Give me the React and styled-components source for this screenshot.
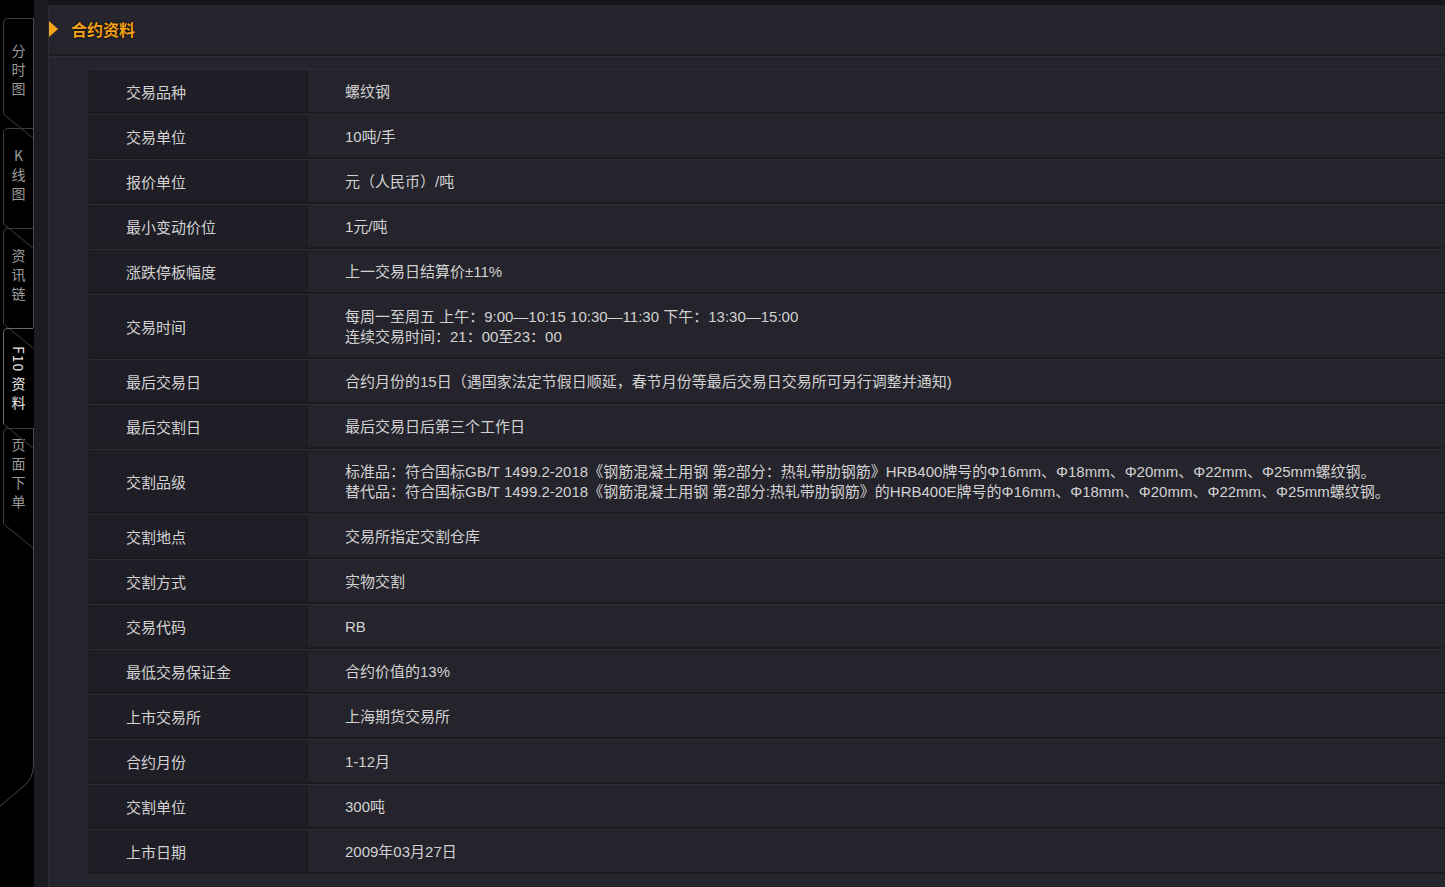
import React from "react";
import styled, { createGlobalStyle } from "styled-components";

const GlobalStyle = createGlobalStyle`
  html, body { margin: 0; padding: 0; background: #17161c; overflow: hidden; }
  body { font-family: "Liberation Sans", "Noto Sans CJK SC", "Microsoft YaHei", sans-serif; }
`;

const Page = styled.div`
  display: flex;
  width: 1445px;
  height: 887px;
  overflow: hidden;
`;

const Sidebar = styled.nav`
  position: relative;
  flex: 0 0 34px;
  background: #000;
  padding-top: 18px;
  display: flex;
  flex-direction: column;
  box-sizing: border-box;
`;

const SideFrame = styled.svg`
  position: absolute;
  left: 0;
  top: 0;
  pointer-events: none;
`;

const Tab = styled.div`
  height: ${(p) => p.$h}px;
  box-sizing: border-box;
  padding-top: ${(p) => p.$pt}px;
  display: flex;
  justify-content: center;
  padding-left: 3px;
`;

const TabText = styled.span`
  writing-mode: vertical-rl;
  text-orientation: ${(p) => (p.$upright ? "upright" : "mixed")};
  font-family: "Noto Sans CJK SC", sans-serif;
  font-size: 14px;
  line-height: 16px;
  letter-spacing: 5px;
  color: ${(p) => (p.$active ? "#e8e8e8" : "#9a9a9a")};
`;

const Latin = styled.span`
  letter-spacing: 1px;
  margin-bottom: 4px;
`;

const Gutter = styled.div`
  flex: 0 0 14px;
  background: #1c1b21;
`;

const Main = styled.main`
  flex: 1;
  padding-top: 5px;
  background: #16151b;
  min-width: 0;
`;

const Panel = styled.section`
  height: 100%;
  background: #26252d;
  border-left: 1px solid #2c2b33;
`;

const Header = styled.header`
  height: 49px;
  display: flex;
  align-items: center;
  border-bottom: 2px solid #1c1b22;
  box-shadow: 0 1px 0 #2e2d35;
`;

const Arrow = styled.span`
  width: 0;
  height: 0;
  border-top: 8px solid transparent;
  border-bottom: 8px solid transparent;
  border-left: 9px solid #f5a31a;
  margin-top: -2px;
`;

const Title = styled.h2`
  margin: -2px 0 0 13px;
  font-family: "Noto Sans CJK SC", sans-serif;
  font-size: 16px;
  font-weight: bold;
  color: #f5a31a;
  text-shadow: 0 0 2px #000, 0 0 1px #000;
`;

const Content = styled.div`
  padding: 13px 0 0 39px;
`;

const Table = styled.div`
  display: flex;
  flex-direction: column;
  background: #25242c;
  border-left: 1px solid #1c1b22;
`;

const Row = styled.div`
  display: flex;
  min-height: ${(p) => (p.$tall ? 65 : 45)}px;
  box-sizing: border-box;
  border-top: 1px solid #2d2c34;
  border-bottom: 2px solid #1b1a20;
`;

const Label = styled.div`
  flex: 0 0 219px;
  box-sizing: border-box;
  padding-left: 37px;
  display: flex;
  align-items: center;
  background: #1f1e26;
  border-right: 1px solid #1a1920;
  font-size: 15px;
  color: #d2d2d2;
`;

const Value = styled.div`
  flex: 1;
  padding-left: 37px;
  padding-top: 1px;
  display: flex;
  flex-direction: column;
  justify-content: center;
  font-size: 15px;
  line-height: 20px;
  color: #d2d2d2;
  white-space: nowrap;
`;

const tabs = [
  { text: "分时图", h: 110, pt: 26 },
  { text: "K线图", h: 100, pt: 21, upright: true },
  { text: "资讯链", h: 100, pt: 21 },
  { text: "资料", latin: "F10", h: 100, pt: 18, active: true },
  { text: "页面下单", h: 110, pt: 10 },
];

const rows = [
  ["交易品种", ["螺纹钢"]],
  ["交易单位", ["10吨/手"]],
  ["报价单位", ["元（人民币）/吨"]],
  ["最小变动价位", ["1元/吨"]],
  ["涨跌停板幅度", ["上一交易日结算价±11%"]],
  ["交易时间", ["每周一至周五 上午：9:00—10:15 10:30—11:30 下午：13:30—15:00", "连续交易时间：21：00至23：00"]],
  ["最后交易日", ["合约月份的15日（遇国家法定节假日顺延，春节月份等最后交易日交易所可另行调整并通知)"]],
  ["最后交割日", ["最后交易日后第三个工作日"]],
  ["交割品级", [
    "标准品：符合国标GB/T 1499.2-2018《钢筋混凝土用钢 第2部分：热轧带肋钢筋》HRB400牌号的Φ16mm、Φ18mm、Φ20mm、Φ22mm、Φ25mm螺纹钢。",
    "替代品：符合国标GB/T 1499.2-2018《钢筋混凝土用钢 第2部分:热轧带肋钢筋》的HRB400E牌号的Φ16mm、Φ18mm、Φ20mm、Φ22mm、Φ25mm螺纹钢。",
  ]],
  ["交割地点", ["交易所指定交割仓库"]],
  ["交割方式", ["实物交割"]],
  ["交易代码", ["RB"]],
  ["最低交易保证金", ["合约价值的13%"]],
  ["上市交易所", ["上海期货交易所"]],
  ["合约月份", ["1-12月"]],
  ["交割单位", ["300吨"]],
  ["上市日期", ["2009年03月27日"]],
];

function Frame() {
  const tops = [18, 128, 228, 328, 428];
  const stroke = "#3c3c3c";
  return (
    <SideFrame width="34" height="887" viewBox="0 0 34 887">
      {tops.map((t, i) => (
        <g key={i}>
          <path
            d={`M3.5 ${t + 96} L3.5 ${t + 5} Q3.5 ${t + 0.5} 8 ${t + 0.5} L33 ${t + 0.5}`}
            fill="none"
            stroke={i === 3 ? "#6a6a6a" : stroke}
            strokeWidth="1"
          />
          <path
            d={`M3.5 ${t + 96} L33 ${t + 120}`}
            fill="none"
            stroke="#2a2a2a"
            strokeWidth="1.2"
          />
        </g>
      ))}
      <path d="M33.5 18 L33.5 328" stroke="#474747" strokeWidth="1" fill="none" />
      <path
        d="M33.5 428 L33.5 765 Q33.5 778 24 786 L0 806"
        stroke="#474747"
        strokeWidth="1"
        fill="none"
      />
    </SideFrame>
  );
}

export default function App() {
  return (
    <>
      <GlobalStyle />
      <Page>
        <Sidebar>
          <Frame />
          {tabs.map((t) => (
            <Tab key={t.text} $h={t.h} $pt={t.pt}>
              <TabText $active={t.active} $upright={t.upright}>
                {t.latin && <Latin>{t.latin}</Latin>}
                {t.text}
              </TabText>
            </Tab>
          ))}
        </Sidebar>
        <Gutter />
        <Main>
          <Panel>
            <Header>
              <Arrow />
              <Title>合约资料</Title>
            </Header>
            <Content>
              <Table>
                {rows.map(([label, lines]) => (
                  <Row key={label} $tall={lines.length > 1}>
                    <Label>{label}</Label>
                    <Value>
                      {lines.map((l) => (
                        <span key={l}>{l}</span>
                      ))}
                    </Value>
                  </Row>
                ))}
              </Table>
            </Content>
          </Panel>
        </Main>
      </Page>
    </>
  );
}
